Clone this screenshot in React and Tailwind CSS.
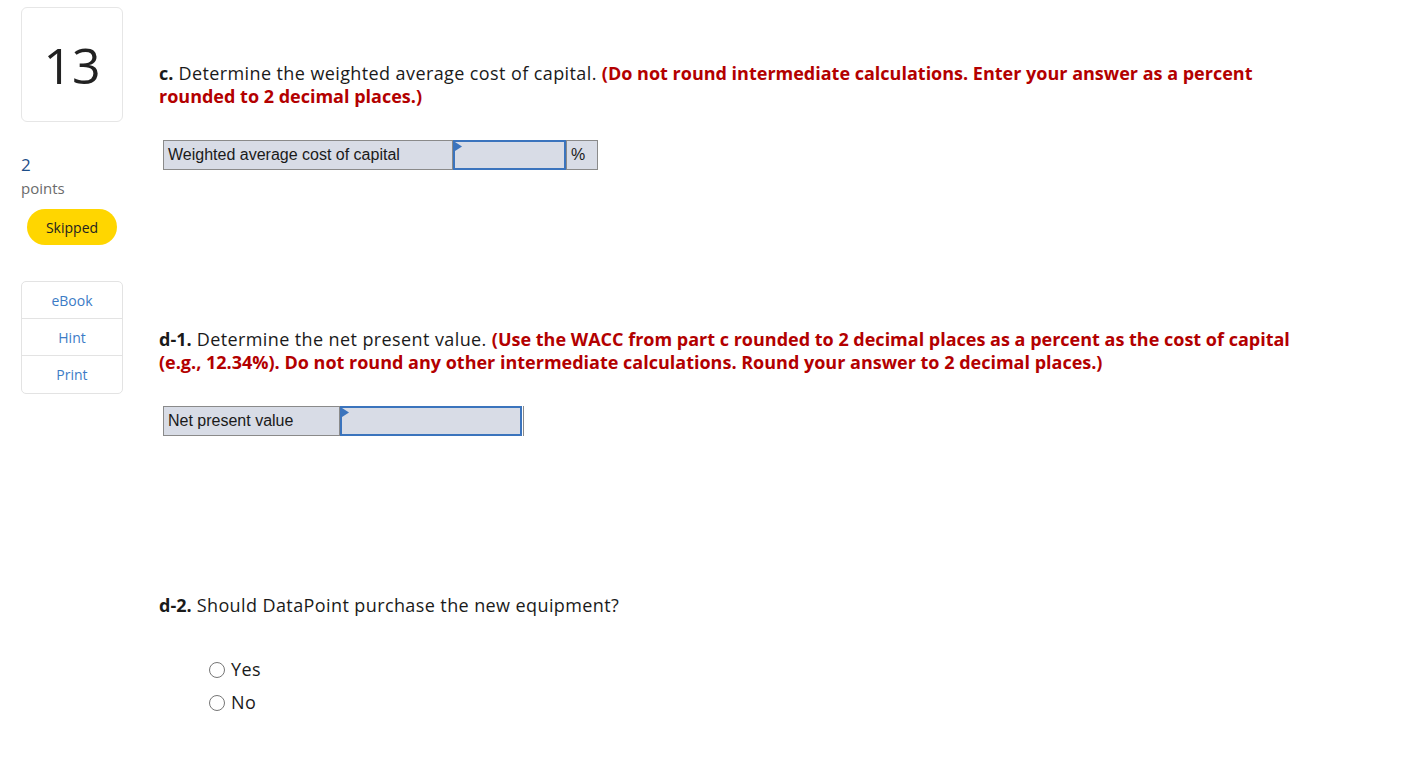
import React from "react";

function InputCell({ w }) {
  return (
    <div className={`relative h-full border-2 border-[#3b74bd] bg-[#d8dce6] ${w}`}>
      <svg className="absolute left-0 top-0" width="7" height="9" viewBox="0 0 7 9">
        <polygon points="0,0 7,4.5 0,9" fill="#3b74bd" />
      </svg>
    </div>
  );
}

function Radio({ label }) {
  return (
    <label className="flex items-center gap-[6px] h-[33px]">
      <span className="w-[16px] h-[16px] rounded-full border border-[#767676] bg-white" />
      <span className="text-[18px] tracking-[0.4px] text-[#1a1a1a]">{label}</span>
    </label>
  );
}

export default function App() {
  return (
    <div className="min-h-[768px] bg-white flex" style={{ fontFamily: "'Open Sans', Lato, sans-serif" }}>
      <div className="ml-[21px] w-[102px] flex flex-col pt-[7px]">
        <div className="h-[115px] w-[102px] border border-[#e6e6e6] rounded-[6px] flex items-center justify-center">
          <span className="text-[50px] text-[#222] font-normal leading-none">13</span>
        </div>
        <div className="mt-[33px] text-[17px] leading-[20px] text-[#1d4e89]">2</div>
        <div className="text-[15px] leading-[20px] text-[#6b6b6b] mt-[3px]">points</div>
        <div className="mt-[11px] ml-[6px] w-[90px] h-[36px] rounded-full bg-[#ffd600] flex items-center justify-center text-[14px] text-[#222]">
          Skipped
        </div>
        <div className="mt-[36px] w-[102px] border border-[#e3e3e3] rounded-[5px] flex flex-col text-[14px] text-[#3c7bc6]">
          <div className="h-[37px] flex items-center justify-center border-b border-[#e3e3e3]">eBook</div>
          <div className="h-[37px] flex items-center justify-center border-b border-[#e3e3e3]">Hint</div>
          <div className="h-[37px] flex items-center justify-center">Print</div>
        </div>
      </div>

      <div className="ml-[36px] w-[1156px] flex flex-col">
        <p className="mt-[62px] text-[18px] leading-[23px] tracking-[0.4px] text-[#1a1a1a]">
          <b className="font-bold tracking-normal">c.</b> Determine the weighted average cost of capital.{" "}
          <b className="font-bold tracking-normal text-[#b30000]">
            (Do not round intermediate calculations. Enter your answer as a percent rounded to 2 decimal places.)
          </b>
        </p>
        <div
          className="mt-[32px] ml-[4px] flex h-[30px] w-[435px] text-[16px] text-[#1a1a1a]"
          style={{ fontFamily: "'Liberation Sans', Arial, sans-serif" }}
        >
          <div className="w-[290px] h-full border border-[#8a8a8a] bg-[#d8dce6] flex items-center pl-[4px]">
            Weighted average cost of capital
          </div>
          <InputCell w="w-[113px]" />
          <div className="w-[32px] h-full border border-[#8a8a8a] bg-[#d8dce6] flex items-center pl-[4px]">%</div>
        </div>

        <p className="mt-[158px] text-[18px] leading-[23px] tracking-[0.4px] text-[#1a1a1a]">
          <b className="font-bold tracking-normal">d-1.</b> Determine the net present value.{" "}
          <b className="font-bold tracking-normal text-[#b30000]">
            (Use the WACC from part c rounded to 2 decimal places as a percent as the cost of capital (e.g., 12.34%). Do
            not round any other intermediate calculations. Round your answer to 2 decimal places.)
          </b>
        </p>
        <div
          className="mt-[32px] ml-[4px] flex h-[30px] w-[361px] text-[16px] text-[#1a1a1a]"
          style={{ fontFamily: "'Liberation Sans', Arial, sans-serif" }}
        >
          <div className="w-[177px] h-full border border-[#8a8a8a] bg-[#d8dce6] flex items-center pl-[4px]">
            Net present value
          </div>
          <InputCell w="w-[182px]" />
          <div className="w-[2px] h-full border-r border-[#8a8a8a]" />
        </div>

        <p className="mt-[158px] text-[18px] leading-[23px] tracking-[0.4px] text-[#1a1a1a]">
          <b className="font-bold tracking-normal">d-2.</b> Should DataPoint purchase the new equipment?
        </p>
        <div className="mt-[36px] ml-[50px] flex flex-col">
          <Radio label="Yes" />
          <Radio label="No" />
        </div>
      </div>
    </div>
  );
}
